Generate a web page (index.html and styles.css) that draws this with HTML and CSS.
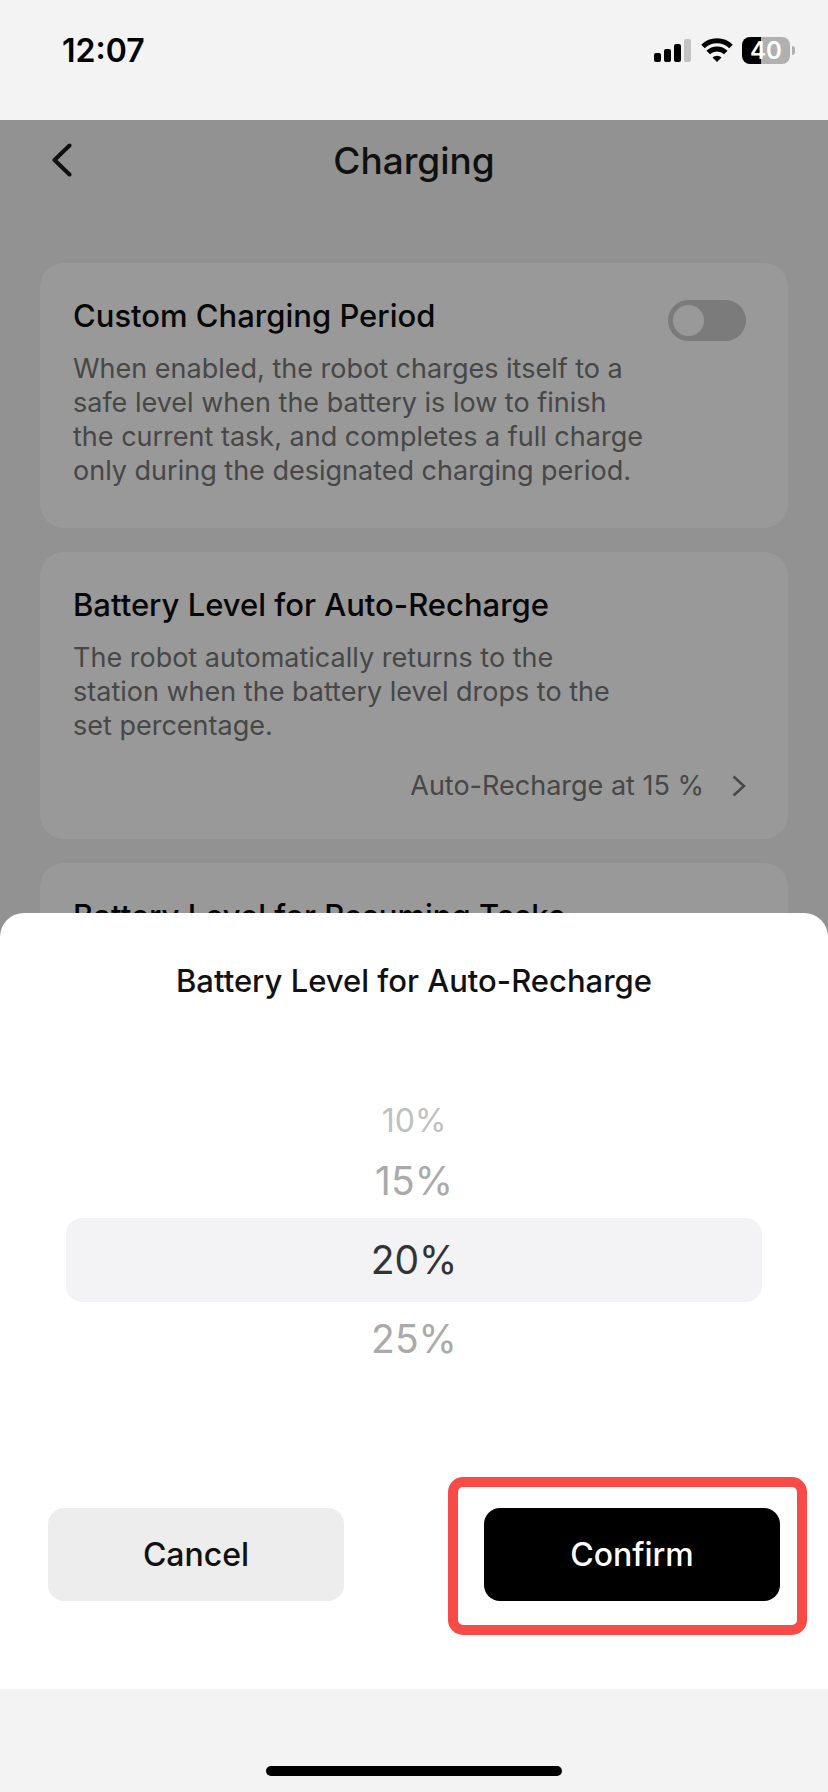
FILE: index.html
```html
<!DOCTYPE html>
<html lang="en">
  <head>
    <meta charset="UTF-8" />
    <meta name="viewport" content="width=device-width, initial-scale=1.0" />
    <title>Charging</title>
    <link rel="stylesheet" href="styles.css">
  </head>
  <body>
    <div class="status-bar">
      <time class="clock">12:07</time>
      <div class="status-icons">
        <svg width="38" height="24" viewBox="0 0 38 24">
          <rect x="0" y="15" width="7" height="9" rx="2" />
          <rect x="10" y="11" width="7" height="13" rx="2" />
          <rect x="20" y="6" width="7" height="18" rx="2" />
          <rect x="30" y="1" width="7" height="23" rx="2" fill="#c3c3c3" />
        </svg>
        <svg width="32" height="24" viewBox="0 0 32 24">
          <g fill="none" stroke="#000" stroke-width="5">
            <path d="M2 8.500a20 20 0 0 1 28 0" />
            <path d="M7.200 14.500a12.600 12.600 0 0 1 17.600 0" />
          </g>
          <path d="M11.500 19.500a6.500 6.500 0 0 1 9 0L16 24z" />
        </svg>
        <div class="battery"><span>40</span></div>
      </div>
    </div>

    <main class="screen">
      <header class="header">
        <button class="back" aria-label="Back">
          <svg width="20" height="34" viewBox="0 0 20 34">
            <path d="M17.500 2.500L2.500 17l15 14.500" fill="none" stroke="#1c1c1c" stroke-width="4" stroke-linecap="round" stroke-linejoin="round" />
          </svg>
        </button>
        <h1>Charging</h1>
      </header>

      <div class="cards">
        <section class="card">
          <div class="card-head">
            <h2><label for="custom-period">Custom Charging Period</label></h2>
            <input type="checkbox" id="custom-period" class="toggle" />
          </div>
          <p>When enabled, the robot charges itself to a safe level when the battery is low to finish the current task, and completes a full charge only during the designated charging period.</p>
        </section>

        <section class="card">
          <h2>Battery Level for Auto-Recharge</h2>
          <p>The robot automatically returns to the station when the battery level drops to the set percentage.</p>
          <button class="value">
            Auto-Recharge at 15 %
            <svg width="14" height="22" viewBox="0 0 14 22">
              <path d="M1.500 1.500L12 11 1.500 20.500" fill="none" stroke="#777" stroke-width="2.500" />
            </svg>
          </button>
        </section>

        <section class="card">
          <h2>Battery Level for Resuming Tasks</h2>
        </section>
      </div>

      <div class="scrim"></div>

      <form class="sheet">
        <h2>Battery Level for Auto-Recharge</h2>
        <div class="picker">
          <label class="far"><input type="radio" name="level" value="10" />10%</label>
          <label><input type="radio" name="level" value="15" />15%</label>
          <label><input type="radio" name="level" value="20" checked />20%</label>
          <label><input type="radio" name="level" value="25" />25%</label>
        </div>
        <div class="actions">
          <button type="button" class="cancel">Cancel</button>
          <button type="button" class="confirm">Confirm</button>
        </div>
      </form>
    </main>

    <footer class="home-bar">
      <span class="indicator"></span>
    </footer>
  </body>
</html>
```

FILE: styles.css
```css
* {
  margin: 0;
  padding: 0;
  box-sizing: border-box;
}
body {
  display: flex;
  flex-direction: column;
  min-height: 100vh;
  background: #f3f3f3;
  color: #111;
  font-family: Inter, "Liberation Sans", sans-serif;
}
button {
  border: none;
  background: none;
  font: inherit;
  color: inherit;
  cursor: pointer;
}
h1,
h2 {
  font-weight: 500;
}
h2 {
  font-size: 31px;
  line-height: 40px;
}

/* status bar */
.status-bar {
  display: flex;
  align-items: center;
  justify-content: space-between;
  height: 120px;
  padding: 0 33px 20px 62px;
  color: #000;
}
.clock {
  font-size: 32px;
  font-weight: 600;
}
.status-icons {
  display: flex;
  align-items: center;
  gap: 9px;
}
.battery {
  position: relative;
  width: 48px;
  height: 27px;
  margin-right: 5px;
  border-radius: 8px;
  background: linear-gradient(to right, #000 40%, #b0b0b0 40%);
  color: #fff;
  font-size: 24px;
  font-weight: 600;
  line-height: 27px;
  text-align: center;
}
.battery::after {
  content: "";
  position: absolute;
  top: 9px;
  right: -5px;
  width: 3px;
  height: 9px;
  border-radius: 0 4px 4px 0;
  background: #b0b0b0;
}

/* settings page */
.screen {
  position: relative;
  flex: 1;
  overflow: hidden;
}
.header {
  display: grid;
  grid-template-columns: 1fr auto 1fr;
  align-items: center;
  height: 80px;
  padding: 0 52px;
}
.header h1 {
  color: #1c1c1c;
  font-size: 37px;
}
.back {
  justify-self: start;
  display: flex;
}
.cards {
  display: flex;
  flex-direction: column;
  gap: 24px;
  padding: 63px 40px 0;
}
.card {
  padding: 33px 42px 40px 33px;
  border-radius: 24px;
  background: #fff;
}
.card-head {
  display: flex;
  justify-content: space-between;
}
.card h2 {
  color: #0d0d0d;
}
.card p {
  max-width: 571px;
  margin-top: 16px;
  color: #777;
  font-size: 27px;
  line-height: 34px;
}
.toggle {
  appearance: none;
  width: 78px;
  height: 41px;
  margin: 4px 0 -5px;
  padding: 5px;
  border-radius: 21px;
  background: #cdcdcd;
  cursor: pointer;
}
.toggle::before {
  content: "";
  display: block;
  width: 31px;
  height: 31px;
  border-radius: 50%;
  background: #fff;
}
.toggle:checked::before {
  margin-left: auto;
}
.value {
  display: flex;
  align-items: center;
  gap: 28px;
  margin: 26px 0 -4px auto;
  color: #777;
  font-size: 27px;
  line-height: 34px;
}
.scrim {
  position: absolute;
  inset: 0;
  background: rgba(0, 0, 0, 0.4);
}

/* bottom sheet */
.sheet {
  position: absolute;
  left: 0;
  right: 0;
  bottom: 0;
  padding: 48px 48px 88px;
  border-radius: 24px 24px 0 0;
  background: #fff;
}
.sheet h2 {
  text-align: center;
}
.picker {
  display: flex;
  flex-direction: column;
  margin: 97px 18px 132px;
}
.picker label {
  color: #aaa;
  font-size: 39px;
  line-height: 74px;
  text-align: center;
  cursor: pointer;
}
.picker input {
  position: absolute;
  opacity: 0;
}
.picker .far {
  color: #c0c0c0;
  font-size: 32px;
  line-height: 46px;
}
.picker label:has(:checked) {
  border-radius: 16px;
  background: #f3f3f5;
  color: #333;
  line-height: 84px;
}
.actions {
  display: flex;
  justify-content: space-between;
}
.actions button {
  position: relative;
  width: 296px;
  height: 93px;
  border-radius: 16px;
  font-size: 32px;
  font-weight: 500;
}
.cancel {
  background: #ededed;
}
.actions .confirm {
  background: #000;
  color: #fff;
}
.confirm::after {
  content: "";
  position: absolute;
  inset: -31px -27px -34px -36px;
  border: 10px solid #f84b47;
  border-radius: 15px;
}

.home-bar {
  display: flex;
  justify-content: center;
  align-items: flex-end;
  height: 103px;
  padding-bottom: 16px;
}
.indicator {
  width: 296px;
  height: 10px;
  border-radius: 5px;
  background: #000;
}
```
